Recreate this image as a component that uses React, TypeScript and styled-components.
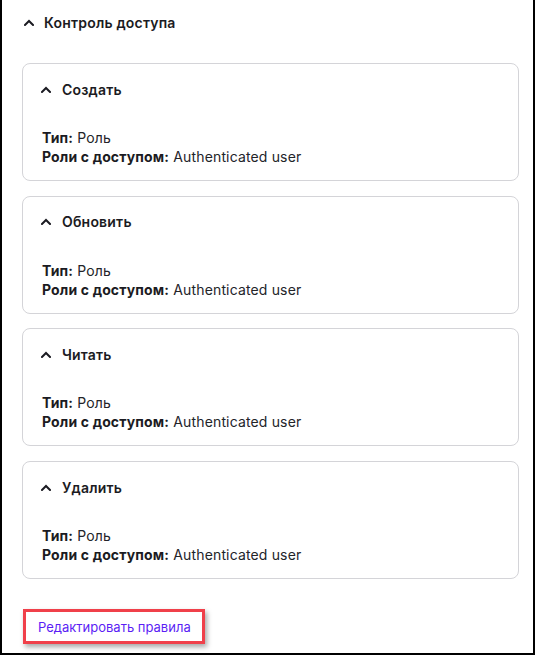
import React from "react";
import styled, { createGlobalStyle } from "styled-components";

const GlobalStyle = createGlobalStyle`
  html, body {
    margin: 0;
    padding: 0;
    background: #ffffff;
  }
  body {
    font-family: Inter, "Noto Sans", "Liberation Sans", sans-serif;
    color: #232429;
    -webkit-font-smoothing: antialiased;
  }
`;

const Frame = styled.div`
  box-sizing: border-box;
  width: 535px;
  height: 655px;
  border: 2px solid #000000;
  border-top: none;
  display: flex;
  flex-direction: column;
`;

const SectionHeader = styled.div`
  height: 44px;
  display: flex;
  align-items: center;
  gap: 10px;
  padding-left: 22px;
  font-size: 14px;
  font-weight: 600;
  letter-spacing: 0.2px;
  color: #1b1b22;
`;

const CardList = styled.div`
  display: flex;
  flex-direction: column;
  gap: 14.7px;
  margin: 19px 14px 0 20px;
`;

const Card = styled.div`
  box-sizing: border-box;
  border: 1px solid #d4d4d8;
  border-radius: 8px;
  padding: 0 19px 14px 19px;
`;

const CardTitle = styled.div`
  height: 50px;
  display: flex;
  align-items: center;
  gap: 11px;
  font-size: 14px;
  font-weight: 600;
  letter-spacing: 0.2px;
  color: #1b1b22;
  margin-left: -1px;
`;

const CardBody = styled.div`
  margin-top: 14px;
  font-size: 14px;
  line-height: 19px;
  letter-spacing: 0.15px;
`;

const Line = styled.div``;

const Label = styled.span`
  font-weight: 700;
  color: #1b1b22;
`;

const Footer = styled.div`
  margin: 30px 0 0 21px;
`;

const EditButton = styled.button`
  box-sizing: border-box;
  height: 35px;
  padding: 0 13px 0 14px;
  background: #ffffff;
  border: 1px solid #5b1ef5;
  outline: 3px solid #f0404a;
  outline-offset: -3px;
  box-shadow: 2px 3px 5px rgba(0, 0, 0, 0.35);
  font-family: inherit;
  font-size: 13px;
  color: #5b1ef5;
  cursor: pointer;
`;

const Chevron: React.FC = () => (
  <svg width="10" height="7" viewBox="0 0 10 7" fill="none">
    <path d="M1 6 L5 2 L9 6" stroke="#1b1b22" strokeWidth="2" strokeLinecap="square" />
  </svg>
);

const operations = ["Создать", "Обновить", "Читать", "Удалить"];

export default function App() {
  return (
    <>
      <GlobalStyle />
      <Frame>
        <SectionHeader>
          <Chevron />
          Контроль доступа
        </SectionHeader>
        <CardList>
          {operations.map((op) => (
            <Card key={op}>
              <CardTitle>
                <Chevron />
                {op}
              </CardTitle>
              <CardBody>
                <Line>
                  <Label>Тип:</Label> Роль
                </Line>
                <Line>
                  <Label>Роли с доступом:</Label> Authenticated user
                </Line>
              </CardBody>
            </Card>
          ))}
        </CardList>
        <Footer>
          <EditButton>Редактировать правила</EditButton>
        </Footer>
      </Frame>
    </>
  );
}
